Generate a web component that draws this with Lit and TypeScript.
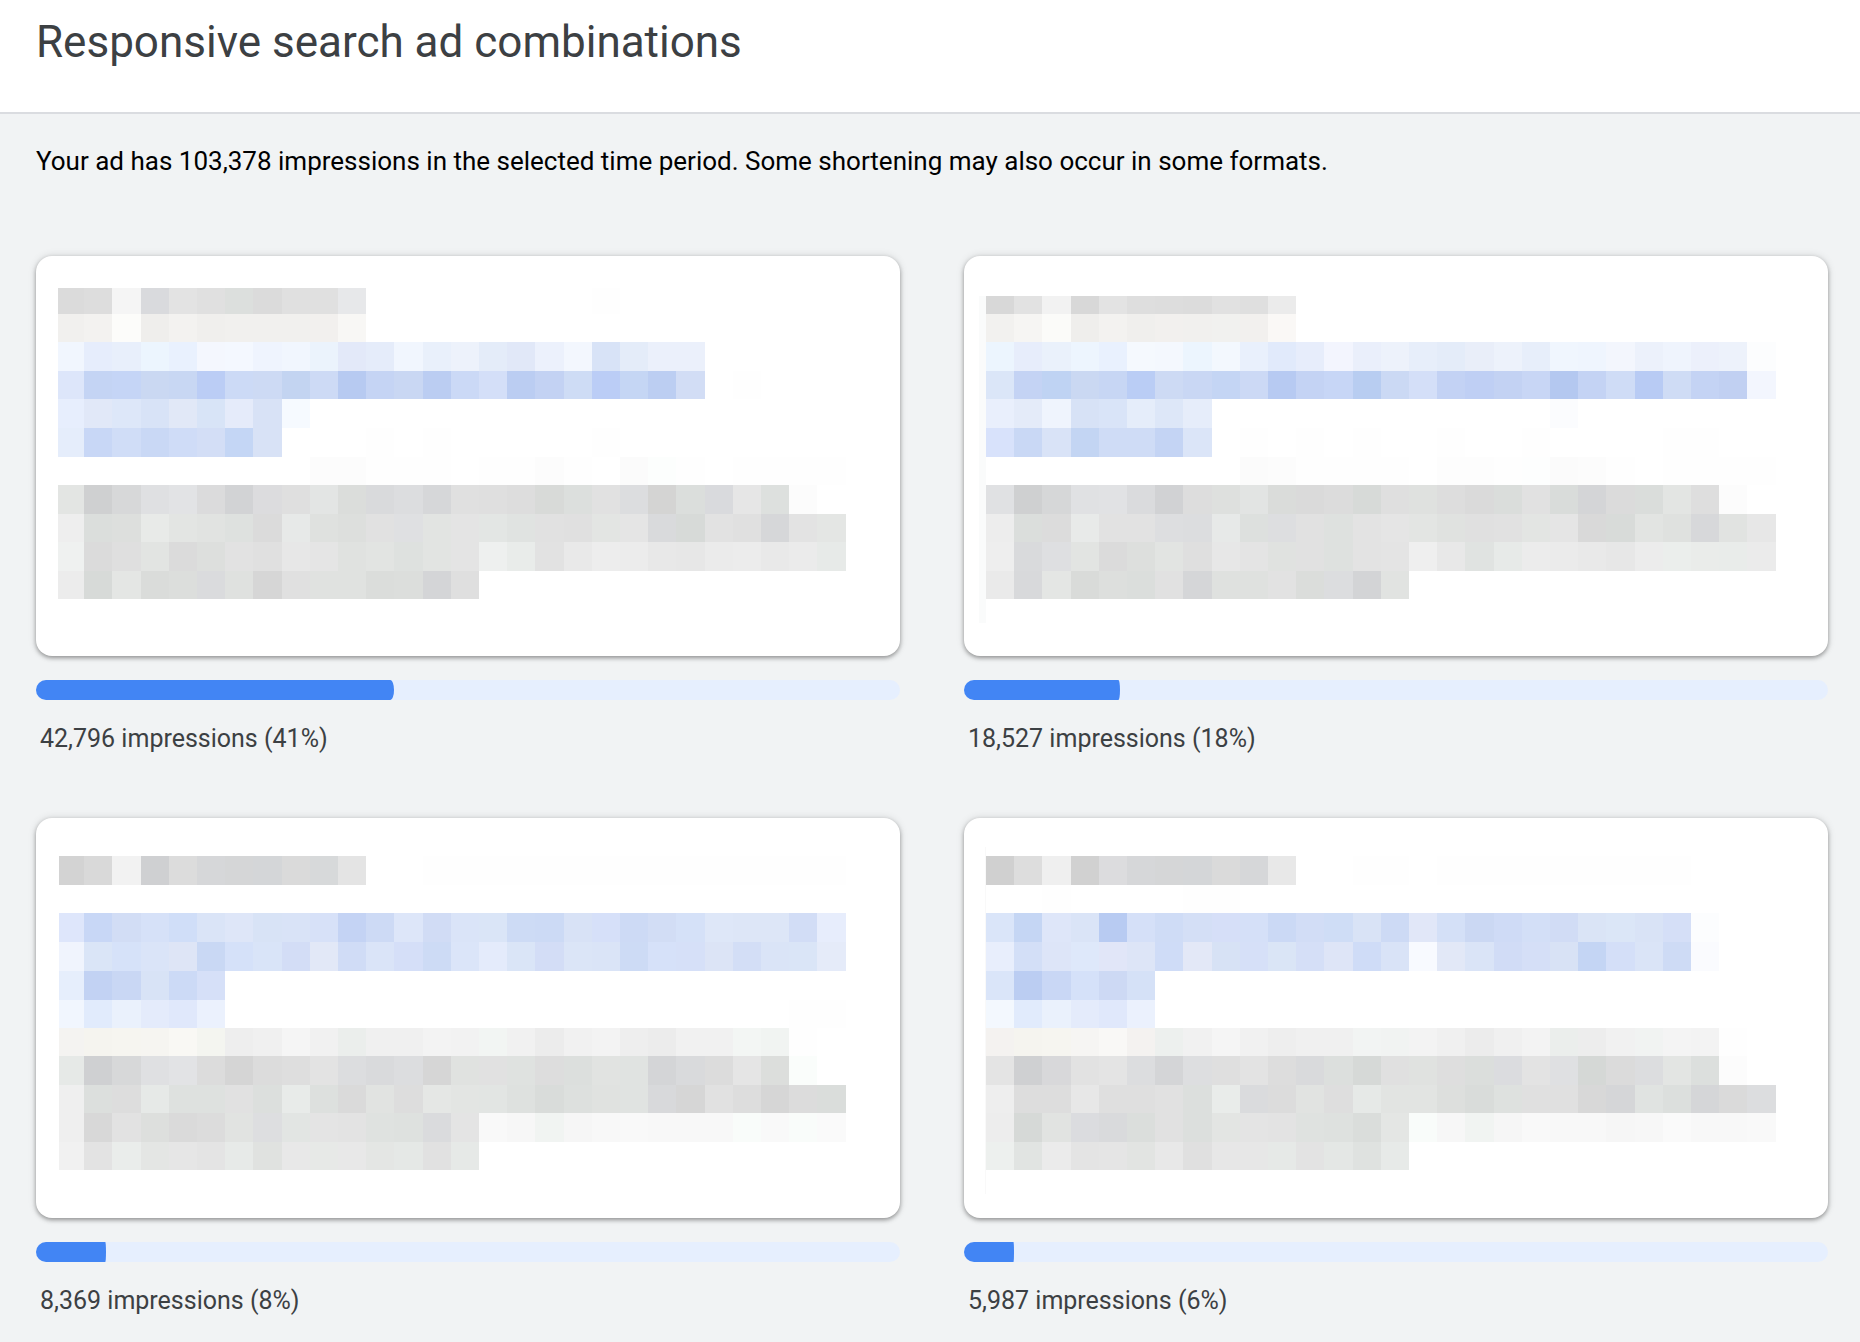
import { LitElement, html, svg, css } from "lit";
import { customElement, property } from "lit/decorators.js";
import { styleMap } from "lit/directives/style-map.js";

/** One band of mosaic cells: its top and bottom edge, then one colour per cell. */
interface Band {
  top: number;
  bottom: number;
  cells: string;
}

interface Combination {
  impressions: string;
  share: number;
  percent: number;
  /** Left edge of the first, partly clipped column. */
  left: number;
  /** Where the column grid starts inside the card. */
  origin: number;
  strip?: { x: number; width: number; top: number; bottom: number; color: string };
  bands: Band[];
}

const CARD_WIDTH = 864;
const CARD_HEIGHT = 400;
const COLUMN_PITCH = 28.2;

const COMBINATIONS: Combination[] = [
  {
    impressions: "42,796",
    share: 41.4,
    percent: 41,
    left: 22,
    origin: 20,
    bands: [
      { top: 32, bottom: 58, cells: "dbdbdb dddddd f5f5f5 d9dadd e3e3e3 e0e0e0 dcdfdd dbdbdb e0e0e0 e0e0e0 e7e8ea - - - - - - - - fefefe" },
      { top: 58, bottom: 86, cells: "f1f0ee f3f2f0 fcfcfa efeeec f3f2f0 f0efed f1f0ee f1f0ee f1f0ee f2f0ee f8f7f5" },
      { top: 86, bottom: 115, cells: "f1f6fe e6edfc e8effb ecf5fe e9f1fe f4f7fe f4f8ff eff4fe f1f6fe ebf3fc e3e9f9 e5ecfa f1f6fe e9f0fb edf2fb e4ecf9 e1e8f8 ecf1fc f3f7fe d8e3f7 e4ecf9 ebf0fb ebf0fb" },
      { top: 115, bottom: 143, cells: "dde6fa c4d4f4 c5d5f6 cad8f2 c8d7f3 bbcdf5 ccdaf6 cddaf4 c3d4f1 cddaf5 b7caf1 c5d4f4 c9d7f3 bbcdf2 cbd9f6 d4dff8 bbcdf2 c3d2f3 cedcf5 bbcdf6 c5d6f4 bccef2 d2ddf5 - fefefe" },
      { top: 143, bottom: 172, cells: "e7eefd e1e8f8 dde7f9 d8e3f7 e1e8f7 d8e4f7 e5ebfa d8e2f6 f6faff" },
      { top: 172, bottom: 201, cells: "e5edfb c8d7f6 d0ddf7 c9d8f5 cfdcf7 d3def6 c4d6f5 d8e2f6 - - - fefefe - fefefe - - - - - fefefe" },
      { top: 201, bottom: 229, cells: "- - - - - - - - - fcfcfc fcfcfc fefefe fefefe fefefe - fefefe fefefe fcfcfc fefefe - fbfbfb fcfefd fefefe - fefefe fefefe fefefe fefefe" },
      { top: 229, bottom: 258, cells: "e3e5e3 cfd0d1 d7d8d9 dfe0e2 e2e3e5 dbdbdc d2d3d5 dcdcde dfdfdf e3e5e4 dbdddb d9dadc dcdddf d6d7d9 e0e0e0 dfdfdf dddddd d8dad8 dcdfdd e1e1e1 dcdddf d4d4d3 dbdedc d9dadd e6e6e6 dde0de fcfcfc" },
      { top: 258, bottom: 286, cells: "eeeeee dbdedc dddfdd e8eae8 e3e5e3 e1e3e1 dee1df dbdbdb e7e9e8 dfe1df dddfdd e1e1e1 dfe0e2 e2e4e2 e4e4e4 e3e6e4 e0e3e1 e1e1e1 e0e0e0 e3e5e3 e5e5e5 d9dadc d7dad8 e2e2e2 e0e0e0 d6d7d9 e3e3e3 e4e6e4" },
      { top: 286, bottom: 315, cells: "eff1f0 dbdbdb dfdfdf e2e4e2 dbdbdb dddfdd e2e2e2 e0e0e0 e7e7e7 e5e5e5 e0e2e0 e2e4e2 dee1df e2e4e2 e4e4e4 eef0ef e9ecea e2e2e2 e9e9e9 ededed ececec e8e8e8 e7e7e7 ebebeb ececec e9e9e9 ebebeb e7eae8" },
      { top: 315, bottom: 343, cells: "ececec d7dad8 e4e6e4 dadcda dcdedc dadbdd dfe1df d6d6d6 e0e0e0 e0e2e0 e0e2e0 dbdddb dcdedc d4d5d7 dfdfdf" },
    ],
  },
  {
    impressions: "18,527",
    share: 18,
    percent: 18,
    left: 22,
    origin: 22,
    strip: { x: 15, width: 7, top: 40, bottom: 367, color: "fafbfb" },
    bands: [
      { top: 40, bottom: 58, cells: "d8d8d8 e2e2e2 f2f2f2 d8d8d8 e3e3e3 dedede dddddd dcdcdc e1e1e1 dfdfdf ebebeb" },
      { top: 58, bottom: 86, cells: "f2f1ef f6f5f3 fbfbf9 efeeec f3f2f0 f0efed f2f0ee f1f0ee f1f1ef f2f0ee faf8f6" },
      { top: 86, bottom: 115, cells: "ecf5fe e7edfb eaf1fb edf5fe e9f1fe f5f9fe f4f8fe ecf5fe f3f8fe e9f0fc e1eafb e7edfb f3f5fe eaeffb edf2fb e7eefa e4ecf9 e9eef9 edf2fb e7eefa f0f6fe eff5fe f3f6fd ecf1fb eff4fd ecf0fb edf2fb fcfdfe" },
      { top: 115, bottom: 143, cells: "dbe6f8 c4d3f4 bfd3f3 cad8f2 c7d6f4 bacdf5 cddaf4 c9d7f4 c4d5f4 ccd9f5 b7caf2 c4d3f4 c7d6f6 b8cdf1 cbd9f4 d4dff8 c3d2f4 bfcff4 c3d2f3 c8d6f5 b4c8f0 c4d3f4 cfdcf6 b8cbf4 cfdcf5 c4d3f4 c1d0f2 f3f6fe" },
      { top: 143, bottom: 172, cells: "e9effc e4ebf9 eff4fd d7e2f6 d9e4f8 e5edfa dde7f8 e6edfa - - - - - - - - - - - - fbfcfe" },
      { top: 172, bottom: 201, cells: "d8e2fb c9d8f5 d9e3f7 c3d5f3 cfdcf6 cfdcf6 c4d4f4 dbe5f8 - fefefe - fefefe - fefefe - - fefefe - - fefefe - - - - fefefe fefefe" },
      { top: 201, bottom: 229, cells: "- - - - - - - - - fbfbfb fcfcfc fefefe fefefe fefefe fefefe - fdfdfd fdfdfd fefefe fdfefe fbfbfb fcfcfc fefefe - fefefe fefefe fefefe fefefe" },
      { top: 229, bottom: 258, cells: "e0e1e3 cfd0d1 d6d7d8 e0e1e3 e1e2e4 dadbdd d1d2d4 dddddd dee0de e2e4e3 dadcda dadada dcdcdc d7dad8 dfdfdf dfe1df dddddd dadada dadddb e1e1e1 d9dcda d4d5d7 dbdbdb dadddb e3e5e3 dedede fcfcfc" },
      { top: 258, bottom: 286, cells: "ededed dbdedc dcdcdc e8eae9 e2e2e2 e2e2e2 dddee0 dcdddf e7e9e8 dde0de dddee0 e1e1e1 dee1df e3e3e3 e5e5e5 e3e5e3 e0e2e0 e0e0e0 e1e1e1 e3e5e3 e5e5e5 d9d9d9 d8dbd9 e2e4e2 dfe1df d7d8da e1e3e1 e7e7e7" },
      { top: 286, bottom: 315, cells: "eeeeee d9dadc dedfe1 e2e4e2 dbdbdb dddfdd e2e4e2 dfdfdf e7e7e7 e4e4e4 e0e2e0 e1e1e1 dee1df e3e3e3 e4e4e4 efefef e8e8e8 e0e3e1 e7eae8 ececec ebebeb e9e9e9 e7e7e7 ececec ebeeec eaecea e9ecea ebebeb" },
      { top: 315, bottom: 343, cells: "eaeaea d8d9db e4e6e4 d9dbd9 dddfdd dbdedc e1e1e1 d5d6d8 dfe1df dfe1df e2e2e2 dbdddb dcdddf d3d4d6 e1e3e1" },
    ],
  },
  {
    impressions: "8,369",
    share: 8.1,
    percent: 8,
    left: 23,
    origin: 20,
    bands: [
      { top: 38, bottom: 67, cells: "d3d3d3 d9d9d9 f2f2f2 cfd0d2 dcdcdc d6d7d9 d5d6d7 d4d6d8 dadada d7d9da e4e4e4 - - fefefe fefefe fefefe fefefe fefefe fefefe fefefe fefefe fefefe fefefe fefefe fefefe fefefe fefefe fefefe" },
      { top: 95, bottom: 124, cells: "dee6fb c8d7f6 d2ddf5 d6e1f8 d0def8 dae4f7 dee6f8 d8e3f6 d9e3f7 d7e1f8 c4d3f4 cddaf5 dde6f9 d1dcf5 dae4f8 dae5f7 cddbf5 ccdaf5 d8e2f6 d6e0f9 cddaf5 d2ddf5 d5e1f8 dee7f8 dde6f7 dde6f7 d2ddf6 e7edfc" },
      { top: 124, bottom: 153, cells: "f0f4fd dae5f7 d6e2f9 dae4f8 dee5f6 c9d8f4 d5e1f9 d9e4f8 d3ddf6 e2e8f7 d0dcf6 dae4f8 d5dff8 cddbf5 dbe5f9 e4ebfb dae5f7 d3ddf6 dbe5f7 dae4f7 cddbf5 d6e1f9 d6e0f8 dce4f6 d3def6 dae4f7 dae5f7 e5ebf9" },
      { top: 153, bottom: 182, cells: "e6eefc c2d2f3 c9d7f4 d8e3f6 ccdaf6 d6e0f8" },
      { top: 182, bottom: 210, cells: "f1f6fe e1ebfc eaf1fc e4ebfb e0e8fb ebf1fd - - - - - - - - - - - - - - - - - - - - fefefe fefefe" },
      { top: 210, bottom: 238, cells: "f4f3f1 f5f4ef f6f5f0 f6f5f1 f9f8f4 f4f5f0 eeeeee f0f0f0 f5f5f5 f1f1f1 ebeeec f0f0f0 f0f0f0 f3f3f3 f2f2f2 f2f5f3 f1f1f1 ececec f1f1f1 f3f3f3 eeeeee ececec f1f1f1 f1f1f1 f3f6f4 f1f4f2 fefefe" },
      { top: 238, bottom: 267, cells: "e6e9e7 cfd0d2 d7d8d9 dfe0e2 e2e3e5 dcdcdc d5d5d5 dcdcdc dedede e3e3e3 dcdddf d9dadc dcdddf d6d6d6 e0e2e0 e1e1e1 dfe2e0 dddddd dcdfdd e1e3e1 e0e3e1 d4d5d7 d9dadc dcdcdc e5e5e5 dcdedc fafdfb" },
      { top: 267, bottom: 295, cells: "efefef dcdfdd dddddd e6e9e7 dee1df dee1df e1e1e1 dcdfdd e8ebe9 dde0de dadada e1e3e1 dddddd e5e7e5 e3e5e3 e2e5e3 dee1df d9dcda dde0de e0e2e0 e0e3e1 d8d9db d6d6d6 e1e1e1 dddddd d6d6d6 dcdcdc dadddb" },
      { top: 295, bottom: 324, cells: "efefef d8d8d8 e2e2e2 dddfdd dadada dcdcdc e1e3e1 dddee0 e2e5e3 e4e4e4 e3e3e3 dfe2e0 dee1df dadbdd e4e4e4 f9f9f9 f7f7f7 f1f4f2 f6f6f6 f8f8f8 f9f9f9 f8f8f8 f8f8f8 f8f8f8 f9fcfa f9f9f9 f9fcfa fafafa" },
      { top: 324, bottom: 352, cells: "f1f1f1 e3e3e3 eaedeb e4e6e4 e6e6e6 e4e4e4 e7eae8 e0e2e0 e8e8e8 e7e9e7 e8e8e8 e4e6e4 e5e8e6 e1e1e1 e6e9e7" },
    ],
  },
  {
    impressions: "5,987",
    share: 5.8,
    percent: 6,
    left: 22,
    origin: 22,
    strip: { x: 21, width: 1, top: 29, bottom: 376, color: "f9f9f9" },
    bands: [
      { top: 38, bottom: 67, cells: "d0d0d0 dddddd efefef d1d1d1 dcdcde d6d7d9 d5d6d7 d4d6d8 dadada d6d7d9 e8e8e8 - - fefefe fefefe - fefefe fefefe fefefe fefefe fefefe fefefe fefefe fefefe fefefe" },
      { top: 67, bottom: 95, cells: "- - fefefe - - - - fefefe fefefe" },
      { top: 95, bottom: 124, cells: "dae5f9 c5d6f4 dee6f9 dae4f7 b8cbf2 d5e0f8 cfdcf6 d4dff6 d6dff8 d5e0f8 cbd9f5 d2ddf6 cfddf6 d9e3f6 cddaf5 e1e7f8 d4e0f7 cbd8f3 cfdbf6 d3dff7 d1dcf5 dae4f6 dbe6f7 d9e3f6 d5dff7 fcfdfe" },
      { top: 124, bottom: 153, cells: "e8eefc d3dff7 dde5f8 dee8fa e1e6f8 dde5f7 cfdcf7 e3e8f7 d7e2f5 d6e0f8 dae5f6 d5dff7 dee5f7 cfdcf7 d9e3f7 f8faff e2e8f7 dae4f7 d1dcf6 d5dff7 d8e2f5 c4d5f4 d4dff8 dae4f7 cedbf5 fafbfe" },
      { top: 153, bottom: 182, cells: "dae5f9 bbcdf2 c9d7f5 d5e1f9 cdd9f4 d5e1f7" },
      { top: 182, bottom: 210, cells: "f3f8fe e1ebfc eaf1fc e4ebfb e0e8fb ebf1fd" },
      { top: 210, bottom: 238, cells: "f4f2f0 f5f4ef f6f5f0 f6f5f3 f9f8f6 f4f2f0 edf0ee f1f1f1 f5f5f5 f1f1f1 eeeeee f0f0f0 f0f0f0 f2f4f3 f1f3f2 f3f3f3 f0f0f0 ececec f0f0f0 f3f3f3 ebeeec ededed f1f1f1 f1f3f2 f4f4f4 f3f3f3 fefefe" },
      { top: 238, bottom: 267, cells: "e4e4e4 cfd0d2 d8d8da e2e2e2 e4e4e4 dcdddf d4d5d7 dddee0 dfdfdf e3e3e3 dddddd d9dadc dcdfdd d6d9d7 e0e0e0 e0e2e0 dedede dbdedc dbdcdf e3e3e3 dfe0e2 d5d8d6 dbdbdb dcdddf e3e5e3 dcdfdd fcfcfc" },
      { top: 267, bottom: 295, cells: "eeeeee dddddd dddddd e7e7e7 dfdfdf dfdfdf e1e1e1 dcdfdd e9ecea dadbdd dcdcdc e1e3e1 dedede e6e9e7 e2e4e2 e2e4e2 dddfdd d9dcda dee1df e0e0e0 e0e0e0 d8d8d8 d5d6d8 e0e3e1 dcdfdd d5d6d8 dadada dcdddf" },
      { top: 295, bottom: 324, cells: "ededed d6d9d7 e1e3e1 dbdcdf d9dadc dbdedc e1e1e1 dcdfdd e3e5e3 e4e4e4 e3e3e3 dfe2e0 dee1df dadddb e4e6e4 f9fcfa f7f7f7 f1f4f2 f6f6f6 f9f9f9 f8f8f8 f8f8f8 f6f6f6 f7f7f7 fafafa f8f8f8 f8f8f8 f9f9f9" },
      { top: 324, bottom: 352, cells: "edf0ee e1e4e2 ebebeb e4e4e4 e5e5e5 e2e4e2 e8e8e8 e0e0e0 e7e7e7 e7e7e7 e6e9e7 e3e3e3 e4e7e5 dfe2e0 e7eae8" },
    ],
  },
];

@customElement("ad-combination")
export class AdCombination extends LitElement {
  @property({ attribute: false }) data!: Combination;

  static styles = css`
    :host {
      display: block;
      min-width: 0;
    }
    .card {
      background: #fff;
      border-radius: 16px;
      box-shadow: 0 2px 4px rgba(0, 0, 0, 0.35), 0 0 8px rgba(0, 0, 0, 0.12);
      overflow: hidden;
    }
    .mosaic {
      display: block;
      width: 100%;
      height: auto;
    }
    .track {
      height: 20px;
      margin-top: 24px;
      border-radius: 10px;
      background: #e6effe;
      overflow: hidden;
    }
    .fill {
      height: 100%;
      border-radius: 0 1% 1% 0 / 0 50% 50% 0;
      background: #4285f4;
    }
    .label {
      margin: 25px 0 0;
      padding-left: 4px;
      font-size: 25px;
      line-height: 28px;
      color: #3c4043;
    }
  `;

  /** Column edges fall on whole units so that neighbouring cells meet without seams. */
  private edge(i: number) {
    return i === 0 ? this.data.left : Math.round(this.data.origin + i * COLUMN_PITCH);
  }

  private band(band: Band) {
    return band.cells.split(" ").map((color, i) => {
      if (color === "-") return null;
      const x = this.edge(i);
      return svg`<rect x=${x} y=${band.top} width=${this.edge(i + 1) - x}
        height=${band.bottom - band.top} fill=${"#" + color}></rect>`;
    });
  }

  render() {
    const { strip, bands, share, impressions, percent } = this.data;
    return html`
      <div class="card">
        <svg
          class="mosaic"
          viewBox="0 0 ${CARD_WIDTH} ${CARD_HEIGHT}"
          shape-rendering="crispEdges"
          aria-hidden="true"
        >
          ${strip
            ? svg`<rect x=${strip.x} y=${strip.top} width=${strip.width}
                height=${strip.bottom - strip.top} fill=${"#" + strip.color}></rect>`
            : null}
          ${bands.map((b) => this.band(b))}
        </svg>
      </div>
      <div
        class="track"
        role="progressbar"
        aria-labelledby="label"
        aria-valuenow=${percent}
        aria-valuemin="0"
        aria-valuemax="100"
      >
        <div class="fill" style=${styleMap({ width: `${share}%` })}></div>
      </div>
      <p class="label" id="label">${impressions} impressions (${percent}%)</p>
    `;
  }
}

@customElement("app-root")
export class AppRoot extends LitElement {
  static styles = css`
    :host {
      display: block;
      min-height: 100vh;
      background: #f1f3f4;
      font-family: Roboto, "Liberation Sans", sans-serif;
    }
    .header {
      padding: 16px 36px 44px;
      background: #fff;
      border-bottom: 2px solid #dadce0;
    }
    .title {
      margin: 0;
      font-size: 44px;
      font-weight: 400;
      line-height: 52px;
      color: #3c4043;
    }
    .content {
      padding: 31px 32px 24px 36px;
    }
    .summary {
      margin: 0;
      font-size: 26px;
      line-height: 32px;
      color: #000;
    }
    .grid {
      display: grid;
      grid-template-columns: 1fr 1fr;
      gap: 65px 64px;
      margin-top: 79px;
    }
  `;

  render() {
    return html`
      <header class="header">
        <h1 class="title">Responsive search ad combinations</h1>
      </header>
      <main class="content">
        <p class="summary">
          Your ad has 103,378 impressions in the selected time period. Some
          shortening may also occur in some formats.
        </p>
        <section class="grid">
          ${COMBINATIONS.map((c) => html`<ad-combination .data=${c}></ad-combination>`)}
        </section>
      </main>
    `;
  }
}
